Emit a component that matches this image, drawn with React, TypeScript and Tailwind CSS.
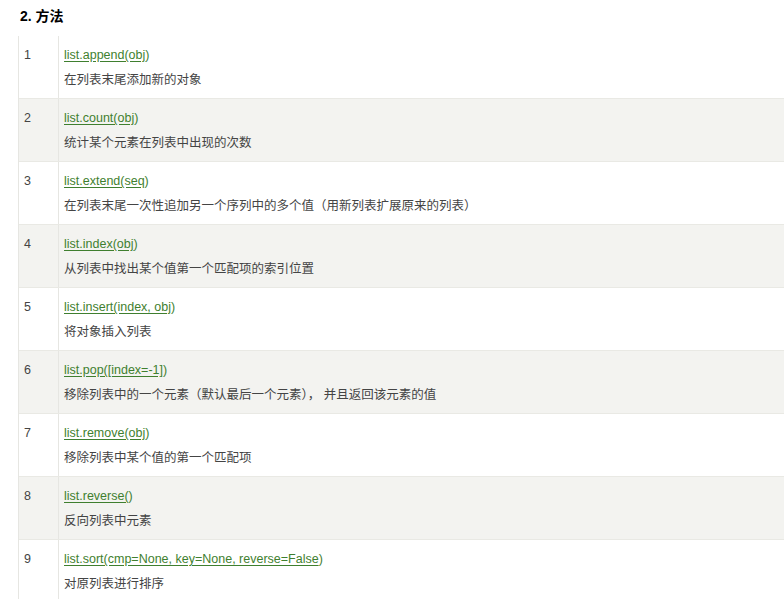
import React from "react";

type Item = { n: number; fn: string; tail: string; desc: string };

const items: Item[] = [
  { n: 1, fn: "list.append(obj", tail: ")", desc: "在列表末尾添加新的对象" },
  { n: 2, fn: "list.count(obj", tail: ")", desc: "统计某个元素在列表中出现的次数" },
  { n: 3, fn: "list.extend(seq", tail: ")", desc: "在列表末尾一次性追加另一个序列中的多个值（用新列表扩展原来的列表）" },
  { n: 4, fn: "list.index(obj", tail: ")", desc: "从列表中找出某个值第一个匹配项的索引位置" },
  { n: 5, fn: "list.insert(index, obj", tail: ")", desc: "将对象插入列表" },
  { n: 6, fn: "list.pop([index=-1]", tail: ")", desc: "移除列表中的一个元素（默认最后一个元素）， 并且返回该元素的值" },
  { n: 7, fn: "list.remove(obj", tail: ")", desc: "移除列表中某个值的第一个匹配项" },
  { n: 8, fn: "list.reverse(", tail: ")", desc: "反向列表中元素" },
  { n: 9, fn: "list.sort(cmp=None, key=None, reverse=False", tail: ")", desc: "对原列表进行排序" },
];

export default function App() {
  return (
    <div
      className="w-[784px] h-[599px] overflow-hidden bg-white text-[#444]"
      style={{ fontFamily: '"Liberation Sans", Arial, "Noto Sans CJK SC", sans-serif' }}
    >
      <h2 className="pl-[20px] pt-[6px] h-[36px] text-[14px] font-bold leading-[20px] text-black">2. 方法</h2>
      <div className="ml-[18px] w-[800px] border-l border-[#e6e6e2]">
        {items.map((it) => (
          <div
            key={it.n}
            className={
              "grid grid-cols-[40px_1fr] h-[63px] border-b border-[#e9e9e4] " +
              (it.n % 2 === 0 ? "bg-[#f3f3f0]" : "bg-white")
            }
          >
            <div className="pl-[5px] pt-[7px] text-[12.5px] leading-[25px] border-r border-[#e6e6e2]">
              {it.n}
            </div>
            <div className="pl-[5px] pt-[7px] text-[12.5px] leading-[25px]">
              <div>
                <span className="text-[#3f7f2f] underline underline-offset-2">{it.fn}</span>
                <span className="text-[#3f7f2f]">{it.tail}</span>
              </div>
              <div>{it.desc}</div>
            </div>
          </div>
        ))}
      </div>
    </div>
  );
}
